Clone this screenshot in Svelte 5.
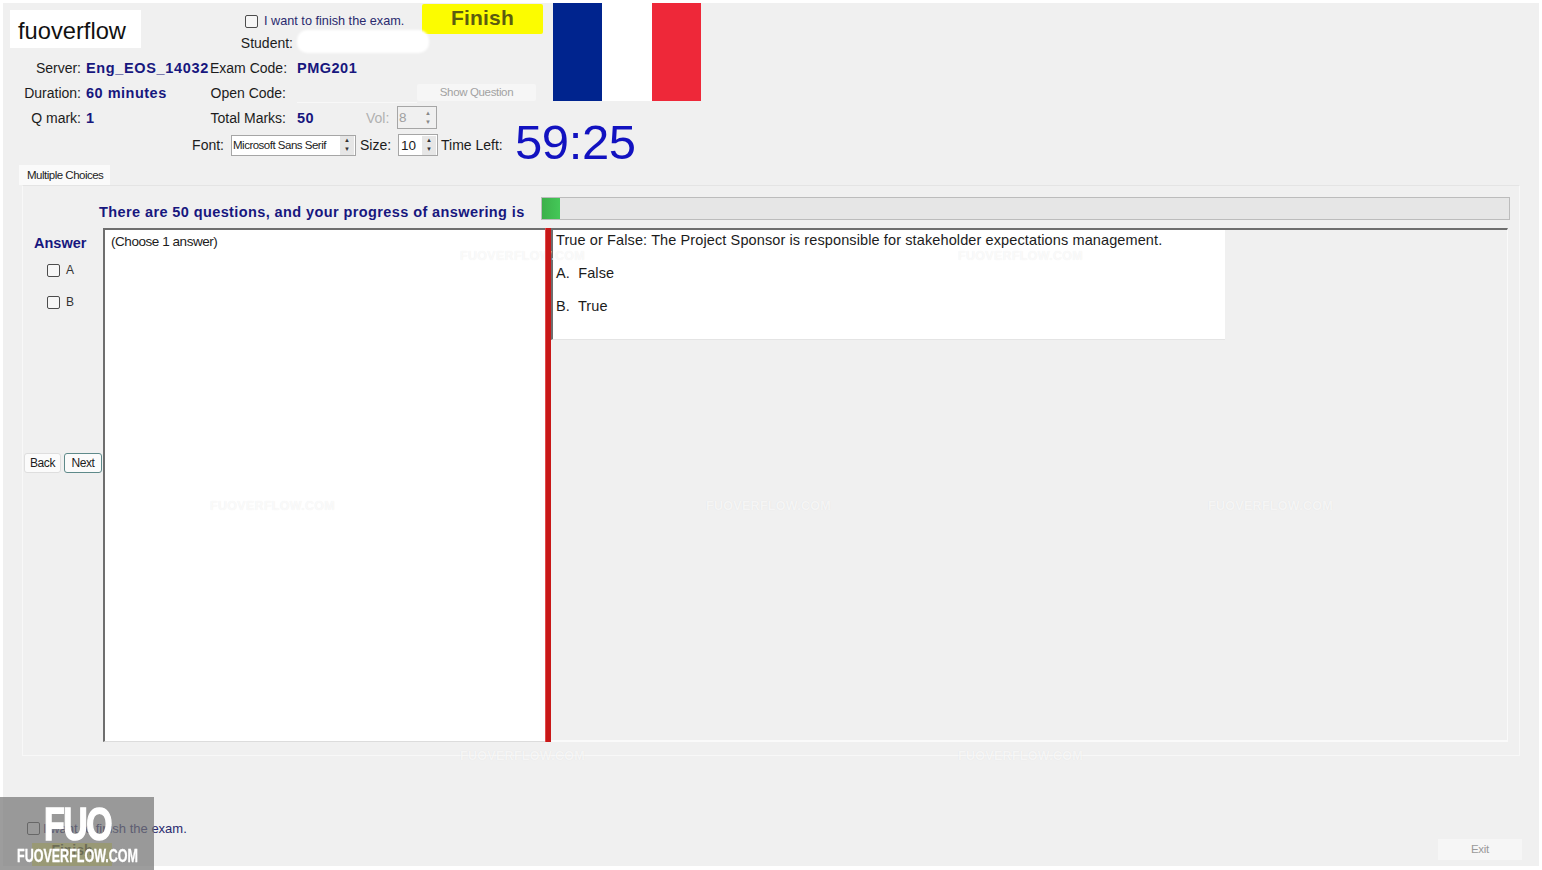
<script>
  const marks = [
    [460, 248], [958, 248],
    [210, 498], [706, 498], [1208, 498],
    [460, 748], [958, 748]
  ];
</script>

<div class="window">
  <header class="head">
    <div class="fields">
      <div class="row r1">
        <div class="logo">fuoverflow</div>
        <label class="finishcheck"><span class="box"></span><span>I want to finish the exam.</span></label>
        <div class="finish">Finish</div>
      </div>
      <div class="row r2">
        <span class="lab student">Student:</span>
        <span class="blank"></span>
      </div>
      <div class="row r3">
        <span class="lab c1">Server:</span><b class="val c2 server">Eng_EOS_14032</b>
        <span class="lab c3">Exam Code:</span><b class="val c4">PMG201</b>
      </div>
      <div class="row r4">
        <span class="lab c1">Duration:</span><b class="val c2">60 minutes</b>
        <span class="lab c3">Open Code:</span><span class="open"></span>
        <span class="show">Show Question</span>
      </div>
      <div class="row r5">
        <span class="lab c1">Q mark:</span><b class="val c2">1</b>
        <span class="lab c3">Total Marks:</span><b class="val c4 short">50</b>
        <span class="vol">Vol:</span>
        <span class="spin dis"><span class="num">8</span><span class="arrows"><i>▲</i><i>▼</i></span></span>
      </div>
      <div class="row r6">
        <span class="lab fontlab">Font:</span>
        <span class="spin fontsel"><span class="num">Microsoft Sans Serif</span><span class="arrows"><i>▲</i><i>▼</i></span></span>
        <span class="lab sizelab">Size:</span>
        <span class="spin size"><span class="num">10</span><span class="arrows"><i>▲</i><i>▼</i></span></span>
        <span class="lab timelab">Time Left:</span>
        <span class="timer">59:25</span>
      </div>
    </div>
    <div class="flag"><span class="blue"></span><span class="white"></span><span class="red"></span></div>
  </header>

  <div class="tab">Multiple Choices</div>
  <section class="panel">
    <div class="progress">
      <div class="ptext">There are 50 questions, and your progress of answering is</div>
      <div class="bar"><div class="fill"></div></div>
    </div>
    <div class="work">
      <aside class="answers">
        <div class="anstitle">Answer</div>
        <label class="opt"><span class="box"></span>A</label>
        <label class="opt"><span class="box"></span>B</label>
        <div class="nav">
          <span class="btn">Back</span>
          <span class="btn next">Next</span>
        </div>
      </aside>
      <div class="left">(Choose 1 answer)</div>
      <div class="split"></div>
      <div class="right">
        <div class="question">
          <p>True or False: The Project Sponsor is responsible for stakeholder expectations management.</p>
          <p>A.&nbsp; False</p>
          <p>B.&nbsp; True</p>
        </div>
      </div>
    </div>
  </section>

  <footer class="foot">
    <div class="footleft">
      <label class="finishcheck bottom"><span class="box"></span><span>I want to finish the exam.</span></label>
      <div class="finish2">Finish</div>
    </div>
    <span class="exit">Exit</span>
  </footer>

  {#each marks as m}
    <span class="wm" style="left:{m[0]}px;top:{m[1]}px">FUOVERFLOW.COM</span>
  {/each}
</div>

<div class="badge">
  <div class="badgelogo">FUO</div>
  <div class="badgetext">FUOVERFLOW.COM</div>
</div>

<style>
  :global(body) {
    margin: 0;
    background: #fff;
    font-family: "Liberation Sans", Arial, sans-serif;
    overflow: hidden;
  }
  .window {
    box-sizing: border-box;
    width: 1536px;
    height: 863px;
    margin: 3px 0 0 3px;
    background: #f0f0f0;
    display: flex;
    flex-direction: column;
    color: #1c1c1c;
    font-size: 14px;
  }
  .head {
    display: flex;
    height: 162px;
    flex: none;
  }
  .fields {
    width: 550px;
    flex: none;
    display: flex;
    flex-direction: column;
  }
  .row {
    display: flex;
    align-items: center;
    white-space: nowrap;
  }
  .r1 { height: 32px; align-items: flex-start; }
  .r2 { height: 16px; }
  .r3 { height: 25px; margin-top: 4px; }
  .r4, .r5 { height: 25px; }
  .r6 { height: 30px; }
  .logo {
    margin: 7px 0 0 7px;
    width: 131px;
    height: 38px;
    box-sizing: border-box;
    padding: 6px 0 0 8px;
    background: #fff;
    color: #111;
    font-size: 23.7px;
    line-height: 30px;
    position: relative;
    z-index: 1;
    flex: none;
  }
  .finishcheck {
    display: flex;
    align-items: center;
    gap: 6px;
    color: #2a2a6e;
    font-size: 12.7px;
  }
  .r1 .finishcheck { margin: 11px 0 0 104px; width: 176px; flex: none; }
  .box {
    display: inline-block;
    box-sizing: border-box;
    width: 13px;
    height: 13px;
    border: 1px solid #4c4c4c;
    border-radius: 2px;
    background: #f6f6f6;
    flex: none;
  }
  .finish {
    margin: 1px 0 0 1px;
    width: 121px;
    height: 30px;
    background: #fcfc00;
    color: #5c5c10;
    font-size: 21px;
    font-weight: 700;
    letter-spacing: 0.2px;
    line-height: 27px;
    text-align: center;
    border-radius: 2px;
    flex: none;
  }
  .lab { text-align: right; flex: none; }
  .student { width: 290px; }
  .blank {
    margin-left: 4px;
    width: 132px;
    height: 23px;
    background: #fff;
    border-radius: 10px;
    filter: blur(1px);
    flex: none;
    position: relative;
    top: -2px;
  }
  .c1 { width: 78px; }
  .val {
    color: #17177e;
    font-size: 14.5px;
    font-weight: 700;
    letter-spacing: 0.5px;
    flex: none;
  }
  .c2 { width: 124px; margin-left: 5px; }
  .server { letter-spacing: 0.65px; }
  .c3 { width: 76px; }
  .c4 { margin-left: 11px; }
  .short { width: 54px; }
  .open {
    margin-left: 11px;
    width: 120px;
    height: 19px;
    border-bottom: 1px solid #f8f8f8;
    flex: none;
  }
  .show {
    width: 119px;
    height: 17px;
    background: #f6f6f6;
    color: #a2a2a2;
    font-size: 11.5px;
    letter-spacing: -0.35px;
    line-height: 17px;
    text-align: center;
    border-radius: 2px;
    flex: none;
  }
  .vol { color: #b0b0b0; width: 31px; flex: none; margin-left: 15px; }
  .spin {
    display: flex;
    box-sizing: border-box;
    align-items: center;
    height: 23px;
    border: 1px solid #a6a6a6;
    background: #fff;
    flex: none;
  }
  .dis { width: 40px; background: #f0f0f0; color: #a0a0a0; }
  .num { flex: 1; padding-left: 1px; font-size: 13.5px; }
  .arrows {
    width: 14px;
    height: 19px;
    display: flex;
    flex-direction: column;
    align-items: center;
    justify-content: center;
    background: #e6e6e6;
    margin-right: 1px;
  }
  .arrows i {
    font-style: normal;
    font-size: 6px;
    line-height: 9px;
    color: #333;
  }
  .dis .arrows { background: #f0f0f0; }
  .dis .arrows i { color: #888; }
  .fontlab { width: 221px; }
  .fontsel { width: 125px; margin-left: 7px; height: 21px; }
  .fontsel .num { font-size: 11.5px; letter-spacing: -0.5px; }
  .sizelab { margin-left: 4px; width: 31px; text-align: left; }
  .size { width: 40px; margin-left: 7px; height: 22px; }
  .size .num { padding-left: 2px; }
  .timelab { margin-left: 3px; width: 63px; text-align: left; }
  .timer {
    margin: 0 0 7px 11px;
    color: #1212c0;
    font-size: 49px;
    line-height: 40px;
    letter-spacing: -0.4px;
  }
  .flag {
    display: flex;
    width: 148px;
    height: 98px;
    flex: none;
  }
  .flag span { flex: 1; }
  .blue { background: #00248e; }
  .white { background: #fff; }
  .red { background: #ee2839; }

  .tab {
    margin-left: 16px;
    width: 91px;
    height: 20px;
    box-sizing: border-box;
    background: #fafafa;
    font-size: 11.5px;
    letter-spacing: -0.5px;
    line-height: 20px;
    padding-left: 8px;
    flex: none;
  }
  .panel {
    box-sizing: border-box;
    margin-left: 19px;
    width: 1498px;
    height: 571px;
    border: 1px solid #f8f8f8;
    border-top-color: #e4e4e4;
    flex: none;
    display: flex;
    flex-direction: column;
  }
  .progress {
    display: flex;
    align-items: center;
    height: 42px;
    flex: none;
  }
  .ptext {
    margin-left: 76px;
    width: 442px;
    color: #17177e;
    font-size: 14.5px;
    font-weight: 700;
    letter-spacing: 0.4px;
    white-space: nowrap;
    flex: none;
    position: relative;
    top: 5px;
  }
  .bar {
    width: 969px;
    height: 23px;
    margin-top: 3px;
    box-sizing: border-box;
    background: #e6e6e6;
    border: 1px solid #bcbcbc;
    flex: none;
  }
  .fill { width: 18px; height: 100%; background: linear-gradient(90deg, #3cb04a, #44c858); }
  .work {
    display: flex;
    height: 514px;
    flex: none;
  }
  .answers {
    width: 80px;
    flex: none;
    display: flex;
    flex-direction: column;
  }
  .anstitle {
    margin: 7px 0 0 11px;
    color: #17177e;
    font-size: 14.5px;
    font-weight: 700;
  }
  .opt {
    display: flex;
    align-items: center;
    gap: 6px;
    height: 32px;
    margin-left: 24px;
    font-size: 12px;
    color: #333;
  }
  .opt:first-of-type { margin-top: 3px; }
  .nav {
    display: flex;
    gap: 3px;
    margin: 135px 0 0 1px;
  }
  .btn {
    box-sizing: border-box;
    width: 37px;
    height: 20px;
    background: #fbfbfb;
    border: 1px solid #dedede;
    border-radius: 3px;
    font-size: 12px;
    letter-spacing: -0.4px;
    line-height: 18px;
    text-align: center;
  }
  .next { width: 38px; border-color: #5e8a8a; }
  .left {
    box-sizing: border-box;
    width: 442px;
    background: #fff;
    border-top: 2px solid #6e6e6e;
    border-left: 2px solid #6e6e6e;
    border-bottom: 1px solid #dcdcdc;
    padding: 4px 0 0 6px;
    font-size: 13.5px;
    letter-spacing: -0.45px;
    flex: none;
  }
  .split {
    width: 6px;
    background: #c81818;
    border-left: 1px solid #e24a4a;
    box-sizing: border-box;
    flex: none;
    position: relative;
    z-index: 1;
  }
  .right {
    box-sizing: border-box;
    width: 957px;
    border-top: 2px solid #6e6e6e;
    border-right: 1px solid #fafafa;
    border-bottom: 2px solid #fafafa;
    flex: none;
  }
  .question {
    box-sizing: border-box;
    width: 674px;
    height: 110px;
    background: #fff;
    border-left: 2px solid #6e6e6e;
    border-bottom: 1px solid #e4e4e4;
    padding: 2px 0 0 3px;
    font-size: 14.5px;
  }
  .question p {
    margin: 0;
    height: 33px;
    line-height: 17px;
    white-space: nowrap;
    letter-spacing: 0.11px;
  }
  .foot {
    flex: 1;
    display: flex;
    align-items: flex-end;
    justify-content: space-between;
    min-height: 0;
    overflow: hidden;
  }
  .footleft {
    display: flex;
    flex-direction: column;
    margin-left: 24px;
  }
  .bottom {
    color: #2a2a6e;
    font-size: 13px;
    gap: 3px;
    height: 16px;
  }
  .finish2 {
    margin: 7px 0 0 5px;
    width: 80px;
    height: 23px;
    background: #f0f07a;
    color: #5c5c10;
    font-size: 14px;
    font-weight: 700;
    line-height: 14px;
    text-align: center;
  }
  .exit {
    width: 84px;
    height: 21px;
    margin: 0 17px 6px 0;
    background: #f6f6f6;
    color: #9a9a9a;
    font-size: 11.5px;
    line-height: 21px;
    text-align: center;
    letter-spacing: -0.3px;
  }
  .wm {
    position: absolute;
    color: rgba(255, 255, 255, 0.7);
    font-size: 12.5px;
    font-weight: 700;
    letter-spacing: 0.3px;
    line-height: 16px;
    white-space: nowrap;
    text-shadow: 0 0 1px rgba(0, 0, 0, 0.08);
    pointer-events: none;
  }
  .badge {
    position: absolute;
    left: 0;
    top: 797px;
    width: 154px;
    height: 73px;
    background: rgba(115, 115, 115, 0.7);
    color: #fff;
    overflow: hidden;
    z-index: 2;
  }
  .badgelogo {
    position: absolute;
    left: 44px;
    top: 4px;
    font-size: 47px;
    line-height: 46px;
    font-weight: 700;
    letter-spacing: -2px;
    -webkit-text-stroke: 1.5px #fff;
    transform: scaleX(0.72);
    transform-origin: left top;
  }
  .badgetext {
    position: absolute;
    left: 17px;
    top: 49px;
    font-size: 18px;
    line-height: 20px;
    font-weight: 700;
    white-space: nowrap;
    -webkit-text-stroke: 0.3px #fff;
    transform: scaleX(0.695);
    transform-origin: left center;
  }
</style>
